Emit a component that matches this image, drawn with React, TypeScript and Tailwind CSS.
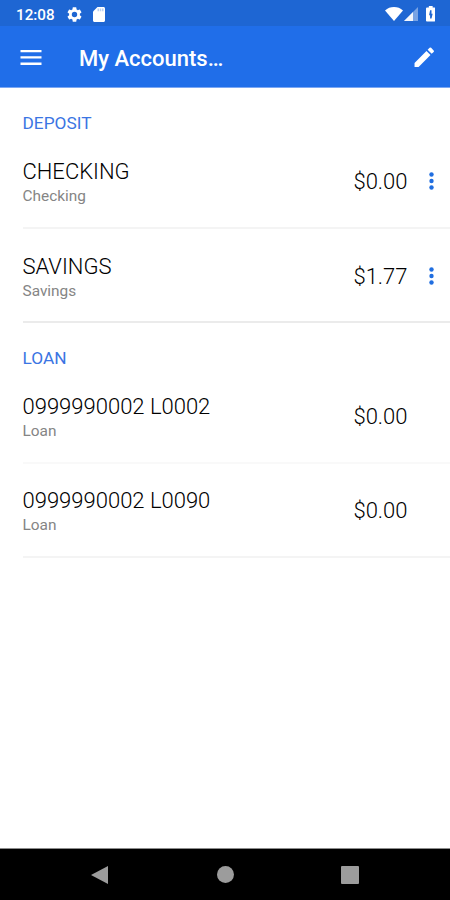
type Account = { name: string; kind: string; amount: string; menu?: boolean; line: string };

const deposits: Account[] = [
  { name: "CHECKING", kind: "Checking", amount: "$0.00", menu: true, line: "bg-[#f4f4f4]" },
  { name: "SAVINGS", kind: "Savings", amount: "$1.77", menu: true, line: "bg-[#ebebeb]" },
];

const loans: Account[] = [
  { name: "0999990002 L0002", kind: "Loan", amount: "$0.00", line: "bg-[#f9f9f9]" },
  { name: "0999990002 L0090", kind: "Loan", amount: "$0.00", line: "bg-[#f4f4f4]" },
];

function StatusBar() {
  return (
    <div className="flex h-[26px] items-center bg-[#1e66d3] pt-[2px] pr-[15px] pl-4 text-white">
      <span className="w-[39px] pt-px text-[15.2px] leading-5 font-medium whitespace-nowrap">12:08</span>
      <svg className="ml-[12px] size-[15px]" viewBox="2 2 20 20" fill="currentColor">
        <path d="M19.14 12.94c.04-.3.06-.61.06-.94 0-.32-.02-.64-.07-.94l2.03-1.58a.49.49 0 0 0 .12-.61l-1.92-3.32a.49.49 0 0 0-.59-.22l-2.39.96c-.5-.38-1.03-.7-1.62-.94L14.4 2.81a.48.48 0 0 0-.48-.41h-3.84a.47.47 0 0 0-.47.41l-.36 2.54c-.59.24-1.13.57-1.62.94l-2.39-.96a.48.48 0 0 0-.59.22L2.74 8.87a.47.47 0 0 0 .12.61l2.03 1.58c-.05.3-.09.63-.09.94s.02.64.07.94l-2.03 1.58a.49.49 0 0 0-.12.61l1.92 3.32c.12.22.37.29.59.22l2.39-.96c.5.38 1.03.7 1.62.94l.36 2.54c.05.24.24.41.48.41h3.84c.24 0 .44-.17.47-.41l.36-2.54c.59-.24 1.13-.56 1.62-.94l2.39.96c.22.08.47 0 .59-.22l1.92-3.32a.47.47 0 0 0-.12-.61l-2.01-1.58zM12 15.6A3.6 3.6 0 1 1 12 8.4a3.6 3.6 0 0 1 0 7.2z" />
      </svg>
      <svg className="ml-[10.5px] h-[15px] w-3" viewBox="4 2 16 20" fill="currentColor">
        <path d="M18 2h-8L4.02 8 4 20c0 1.1.9 2 2 2h12c1.1 0 2-.9 2-2V4c0-1.1-.9-2-2-2z" />
        <path d="M10 4h2v3.500h-2zM13 4h2v3.500h-2zM16 4h2v3.500h-2z" fill="#1e66d3" opacity=".3" />
      </svg>
      <div className="grow" />
      <svg className="h-[14px] w-[18px]" viewBox="0 0 18 14" fill="currentColor">
        <path d="M0 3.4C2.5 1.2 5.6 0 9 0s6.500 1.200 9 3.400L9 14z" />
      </svg>
      <svg className="ml-[1px] h-[14px] w-[14px]" viewBox="0 0 14 14" fill="currentColor">
        <path d="M14 0v14H0z" opacity=".4" />
        <path d="M9 5V14H0z" opacity=".9" />
      </svg>
      <svg className="ml-[7.500px] h-[15.500px] w-[9.500px]" viewBox="7 2 10 20" preserveAspectRatio="none" fill="currentColor">
        <path d="M15.670 4H14V2h-4v2H8.330C7.600 4 7 4.600 7 5.330v15.330C7 21.400 7.600 22 8.330 22h7.330c.74 0 1.340-.6 1.340-1.330V5.330C17 4.600 16.400 4 15.670 4zM11.300 18v-4H10.200L11.300 7.500h1.500v4.500h1.200L12.800 18z" />
      </svg>
    </div>
  );
}

function AppBar() {
  return (
    <header className="flex h-[62px] items-center border-b border-[#7ba7f3] bg-[#206ee9] pr-[15.500px] pl-5 text-white">
      <svg className="mt-px h-[15px] w-[22px]" viewBox="0 0 22 15" fill="currentColor">
        <path d="M.5 0h21v2.300H.5zM.5 6.300h21v2.300H.5zM.5 12.600h21v2.300H.5z" />
      </svg>
      <h1 className="ml-[37px] grow pt-[5px] text-[22px] leading-7 font-medium whitespace-nowrap">My Accounts…</h1>
      <svg className="mt-px size-[20.500px]" viewBox="2.500 2.500 19 19" fill="currentColor">
        <path d="M3 17.250V21h3.750L17.810 9.940l-3.750-3.750L3 17.250zM20.710 7.040a1 1 0 0 0 0-1.410l-2.340-2.340a1 1 0 0 0-1.410 0l-1.830 1.830 3.750 3.750 1.830-1.830z" />
      </svg>
    </header>
  );
}

function Row({ name, kind, amount, menu, line }: Account) {
  return (
    <div className="flex h-[94.33px] flex-col pl-[22.5px]">
      <div className="flex grow items-center pt-px">
        <div className="grow pt-[3px]">
          <div className="text-[22px] leading-7 font-light text-black">{name}</div>
          <div className="text-[15.400px] leading-[21px] text-[#858585]">{kind}</div>
        </div>
        <div className="pt-[2px] text-[22px] leading-7 font-light text-black">{amount}</div>
        <div className="flex w-[42.500px] justify-center pl-[6px]">
          {menu && (
            <svg className="h-[18px] w-[5px]" viewBox="0 0 5 18" fill="#206ee0">
              <circle cx="2.5" cy="2.5" r="2.200" />
              <circle cx="2.5" cy="9" r="2.200" />
              <circle cx="2.5" cy="15.500" r="2.200" />
            </svg>
          )}
        </div>
      </div>
      <div className={`h-[1.500px] shrink-0 ${line}`} />
    </div>
  );
}

function Section({ title, accounts }: { title: string; accounts: Account[] }) {
  return (
    <section>
      <h2 className="h-[46.300px] pt-[24px] pl-[22.5px] text-[17.300px] leading-[22px] text-[#3b75e3]">{title}</h2>
      {accounts.map((a) => (
        <Row key={a.name} {...a} />
      ))}
    </section>
  );
}

export default function App() {
  return (
    <div className="flex h-[900px] w-[450px] flex-col overflow-hidden bg-white font-['Roboto',sans-serif]">
      <StatusBar />
      <AppBar />
      <main className="grow">
        <Section title="DEPOSIT" accounts={deposits} />
        <Section title="LOAN" accounts={loans} />
      </main>
      <nav className="flex h-[52px] shrink-0 items-center justify-between border-t border-[#8c8c8c] bg-black pr-[91px] pl-[91px] text-[#9c9c9c]">
        <svg className="h-[18px] w-[17px]" viewBox="0 0 17 18" fill="currentColor">
          <path d="M17 0v18L0 9z" />
        </svg>
        <span className="ml-px size-[17px] rounded-full bg-[#9c9c9c]" />
        <span className="size-[18px] rounded-[1px] bg-[#9c9c9c]" />
      </nav>
    </div>
  );
}
